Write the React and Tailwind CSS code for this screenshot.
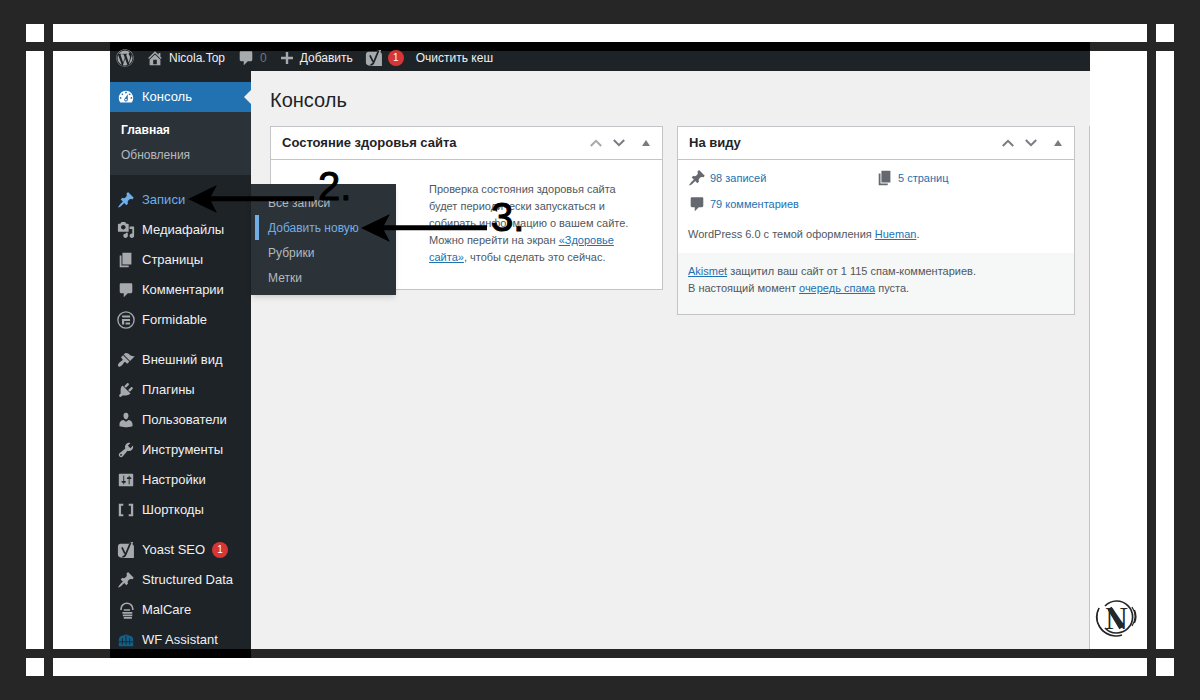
/**
 * WordPress dashboard with the "Posts" flyout open,
 * placed in a double-ruled frame with numbered arrows on top.
 */
import React from 'react';
import { FaWordpress } from 'react-icons/fa';

const paths = {
  dashboard:
    'M3.76 16h12.48c1.1-1.37 1.76-3.11 1.76-5 0-4.42-3.58-8-8-8s-8 3.58-8 8c0 1.89.66 3.63 1.76 5zM10 4c.55 0 1 .45 1 1s-.45 1-1 1-1-.45-1-1 .45-1 1-1zM6 6c.55 0 1 .45 1 1s-.45 1-1 1-1-.45-1-1 .45-1 1-1zm8 0c.55 0 1 .45 1 1s-.45 1-1 1-1-.45-1-1 .45-1 1-1zm-5.37 5.55L12 7v6c0 1.1-.9 2-2 2s-2-.9-2-2c0-.57.24-1.08.63-1.45zM4 10c.55 0 1 .45 1 1s-.45 1-1 1-1-.45-1-1 .45-1 1-1zm12 0c.55 0 1 .45 1 1s-.45 1-1 1-1-.45-1-1 .45-1 1-1zm-5 3c0-.55-.45-1-1-1s-1 .45-1 1 .45 1 1 1 1-.45 1-1z',
  home: 'M16 8.5l1.53 1.53-1.06 1.06L10 4.6l-6.47 6.49-1.06-1.06L10 2.5l4 4v-2h2v4zm-6-2.46l6 5.99V18H4v-5.97zM12 17v-5H8v5h4z',
  plus: 'M17.500 8.500v3h-6v6h-3v-6h-6v-3h6v-6h3v6z',
  pin: 'M10.44 3.02l1.82-1.82 6.36 6.35-1.83 1.82c-1.05-.68-2.48-.57-3.41.36l-.75.75c-.92.93-1.04 2.35-.35 3.41l-1.83 1.82-2.41-2.41-2.8 2.79c-.42.42-3.38 2.71-3.8 2.29s1.86-3.39 2.28-3.81l2.79-2.79L4.1 9.36l1.83-1.82c1.05.69 2.48.57 3.4-.36l.75-.75c.93-.92 1.05-2.35.36-3.41z',
  page: 'M6 15V2h10v13H6zm-1 1h8v2H3V5h2v11z',
  comment:
    'M4.500 2.500h11c.9 0 1.500.6 1.500 1.500v8c0 .9-.6 1.500-1.500 1.500H12L7.500 18v-4.500h-3C3.600 13.500 3 12.900 3 12V4c0-.9.6-1.500 1.500-1.500z',
  media:
    'M13 11V4c0-.55-.45-1-1-1h-1.67L9 1H5L3.67 3H2c-.55 0-1 .45-1 1v7c0 .55.45 1 1 1h10c.55 0 1-.45 1-1zM7 4.5c1.38 0 2.5 1.12 2.5 2.5S8.38 9.5 7 9.5 4.5 8.38 4.5 7 5.62 4.5 7 4.5zM14 6h5v10.5c0 1.38-1.12 2.5-2.5 2.5S14 17.88 14 16.5s1.12-2.5 2.5-2.5c.17 0 .34.02.5.05V9h-3V6zm-4 8.05V13h2v3.5c0 1.38-1.12 2.5-2.5 2.5S7 17.88 7 16.5 8.12 14 9.5 14c.17 0 .34.02.5.05z',
  appearance:
    'M14.48 11.06L7.41 3.99l1.5-1.5c.5-.56 2.3-.47 3.51.32 1.21.8 1.43 1.28 2.91 2.1 1.18.64 2.45 1.26 4.45.85zm-.71.71L6.7 4.7 4.93 6.47c-.39.39-.39 1.02 0 1.41l1.06 1.06c.39.39.39 1.03 0 1.42-.6.6-1.43 1.11-2.21 1.69-.35.26-.7.53-1.01.84C1.43 14.23.4 16.08 1.4 17.07c.99 1 2.84-.03 4.18-1.36.31-.31.58-.66.85-1.02.57-.78 1.08-1.61 1.69-2.21.39-.39 1.02-.39 1.41 0l1.06 1.06c.39.39 1.02.39 1.41 0z',
  plugins:
    'M13.11 4.36L9.87 7.6 8 5.73l3.24-3.24c.35-.34 1.05-.2 1.56.32.52.51.66 1.21.31 1.55zm-8 1.77l.91-1.12 9.01 9.01-1.19.84c-.71.71-2.63 1.16-3.82 1.16H6.14L4.9 17.26c-.59.59-1.54.59-2.12 0-.59-.58-.59-1.53 0-2.12l1.24-1.24v-3.88c0-1.13.4-3.19 1.09-3.89zm7.26 3.97l3.24-3.24c.34-.35 1.04-.21 1.55.31.52.51.66 1.21.31 1.55l-3.24 3.25z',
  users:
    'M10 9.25c-2.27 0-2.73-3.44-2.73-3.44C7 4.02 7.82 2 9.97 2c2.16 0 2.98 2.02 2.71 3.81 0 0-.41 3.44-2.68 3.44zm0 2.57L12.72 10c2.39 0 4.52 2.33 4.52 4.53v2.49s-3.65 1.13-7.24 1.13c-3.65 0-7.24-1.13-7.24-1.13v-2.49c0-2.25 1.94-4.48 4.47-4.48z',
  tools:
    'M16.68 9.77c-1.34 1.34-3.3 1.67-4.95.99l-5.41 6.52c-.99.99-2.59.99-3.58 0s-.99-2.59 0-3.57l6.52-5.42c-.68-1.65-.35-3.61.99-4.95 1.28-1.28 3.12-1.62 4.72-1.06l-2.89 2.89 2.82 2.82 2.86-2.87c.53 1.58.18 3.39-1.08 4.65zM3.81 16.21c.4.39 1.04.39 1.43 0 .4-.4.4-1.04 0-1.43-.39-.4-1.03-.4-1.43 0-.39.39-.39 1.03 0 1.43z',
  settings:
    'M18 16V4c0-.55-.45-1-1-1H3c-.55 0-1 .45-1 1v12c0 .55.45 1 1 1h14c.55 0 1-.45 1-1zM8 11h1c.55 0 1 .45 1 1s-.45 1-1 1H8v1.5c0 .28-.22.5-.5.5s-.5-.22-.5-.5V13H6c-.55 0-1-.45-1-1s.45-1 1-1h1V5.5c0-.28.22-.5.5-.5s.5.22.5.5V11zm5-2h-1c-.55 0-1-.45-1-1s.45-1 1-1h1V5.5c0-.28.22-.5.5-.5s.5.22.5.5V7h1c.55 0 1 .45 1 1s-.45 1-1 1h-1v5.5c0 .28-.22.5-.5.5s-.5-.22-.5-.5V9z',
  brackets: 'M2 3h5v2.200H4.500v9.600H7V17H2zM18 3h-5v2.200h2.500v9.600H13V17h5z',
};

const Icon = ({ name, className = 'size-[18px]' }) => (
  <svg viewBox="0 0 20 20" fill="currentColor" aria-hidden="true" className={`shrink-0 ${className}`}>
    <path d={paths[name]} />
  </svg>
);

const YoastIcon = () => (
  <svg viewBox="0 0 20 20" aria-hidden="true" className="size-[18px] shrink-0">
    <path
      d="M4 3h9.500L14.500 1H18l-1 2.500c1 .4 1.800 1.400 1.800 2.700V19H8l-4-.8c-1.700 0-3-1.200-3-2.800V6c0-1.700 1.300-3 3-3z"
      fill="currentColor"
    />
    <path d="M5.500 7l3.300 7M15.200 1.500L9.800 14.500c-.8 2-1.800 3-3.800 3" fill="none" stroke="#1d2327" strokeWidth="1.900" />
  </svg>
);

const FormidableIcon = () => (
  <svg viewBox="0 0 20 20" aria-hidden="true" className="size-[18px] shrink-0">
    <circle cx="10" cy="10" r="9" fill="none" stroke="currentColor" strokeWidth="1.500" />
    <path d="M5.500 5h9v2.200H7c-.8 0-1.500-.7-1.500-1.500zM5.500 8.800h9V11H8v4H5.500zM9.500 12.700h5V15h-5z" fill="currentColor" />
  </svg>
);

const MalCareIcon = () => (
  <svg viewBox="0 0 20 20" aria-hidden="true" className="size-[18px] shrink-0" fill="none" stroke="currentColor">
    <path d="M4.500 10V8.500a6.500 6 0 0 1 13 0V10" strokeWidth="1.800" />
    <path d="M7.500 10h7M6 13.200h11M6.500 16h10.500M7.500 18.800h9" strokeWidth="1.900" />
  </svg>
);

const WordfenceIcon = () => (
  <svg viewBox="0 0 20 20" aria-hidden="true" className="size-[18px] shrink-0" fill="#11608a">
    <path d="M2 9c.5-3 3-4 5-4l3-1.500L13 5c2 0 4.500 1 5 4v8H2z" />
    <path d="M6 8v7M10 5v10M14 8v7M2 12h16" stroke="#1d2327" strokeWidth="1" />
  </svg>
);

const groups = [
  [
    { label: 'Записи', icon: <Icon name="pin" />, open: true },
    { label: 'Медиафайлы', icon: <Icon name="media" /> },
    { label: 'Страницы', icon: <Icon name="page" /> },
    { label: 'Комментарии', icon: <Icon name="comment" /> },
    { label: 'Formidable', icon: <FormidableIcon /> },
  ],
  [
    { label: 'Внешний вид', icon: <Icon name="appearance" /> },
    { label: 'Плагины', icon: <Icon name="plugins" /> },
    { label: 'Пользователи', icon: <Icon name="users" /> },
    { label: 'Инструменты', icon: <Icon name="tools" /> },
    { label: 'Настройки', icon: <Icon name="settings" /> },
    { label: 'Шорткоды', icon: <Icon name="brackets" /> },
  ],
  [
    { label: 'Yoast SEO', icon: <YoastIcon />, count: 1 },
    { label: 'Structured Data', icon: <Icon name="pin" /> },
    { label: 'MalCare', icon: <MalCareIcon /> },
    { label: 'WF Assistant', icon: <WordfenceIcon /> },
  ],
];

const Badge = ({ children }) => (
  <span className="flex size-4 items-center justify-center rounded-full bg-[#d63638] text-[10px] leading-none text-white">
    {children}
  </span>
);

const Toolbar = () => (
  <header className="-mt-[9px] border-t-[9px] border-black bg-[#1d2327] text-xs text-[#f0f0f1]">
    <nav className="flex h-5 items-center gap-3 pb-[6px] pl-[6px]">
      <a href="#wp" aria-label="WordPress" className="text-[#a7aaad]">
        <FaWordpress size={18} />
      </a>
      <a href="#site" className="flex items-center gap-[5px]">
        <Icon name="home" className="size-[18px] text-[#a7aaad]" />
        Nicola.Top
      </a>
      <a href="#comments" className="flex items-center gap-[5px] text-[#a7aaad]">
        <Icon name="comment" className="size-[18px]" />
        <span className="text-[#70767c]">0</span>
      </a>
      <a href="#new" className="flex items-center gap-[5px]">
        <Icon name="plus" className="size-4 text-[#a7aaad]" />
        Добавить
      </a>
      <a href="#yoast" className="flex items-center gap-[5px] text-[#a7aaad]">
        <YoastIcon />
        <Badge>1</Badge>
      </a>
      <a href="#cache">Очистить кеш</a>
    </nav>
  </header>
);

const Flyout = () => (
  <ul className="absolute -top-px left-full z-10 w-[145px] bg-[#2c3338] pt-[6px] pb-[5px] text-xs text-[#b4b9be] shadow-md">
    {['Все записи', 'Добавить новую', 'Рубрики', 'Метки'].map((item) => (
      <li key={item}>
        <a
          href="#posts"
          className={
            item === 'Добавить новую'
              ? 'ml-1 flex h-[25px] items-center border-l-4 border-[#72aee6] pl-[9px] text-[#72aee6]'
              : 'ml-1 flex h-[25px] items-center pl-[13px]'
          }
        >
          {item}
        </a>
      </li>
    ))}
  </ul>
);

const Sidebar = () => (
  <aside className="relative -mb-[9px] w-[141px] shrink-0 bg-[#1d2327] pt-[11px] text-[13px] text-[#f0f0f1]">
    <a href="#dashboard" className="relative flex h-[30px] items-center gap-[7px] bg-[#2271b1] pl-[7px] text-white">
      <Icon name="dashboard" />
      Консоль
      <span className="absolute right-0 border-y-[7px] border-r-[7px] border-y-transparent border-r-[#f0f0f1]" />
    </a>
    <ul className="bg-[#2c3338] pt-[5px] pb-2 pl-[11px] text-xs">
      <li className="flex h-[25px] items-center font-bold text-white">
        <a href="#home">Главная</a>
      </li>
      <li className="flex h-[25px] items-center text-[#b4b9be]">
        <a href="#updates">Обновления</a>
      </li>
    </ul>
    <div className="flex flex-col gap-[10px] pt-[10px]">
      {groups.map((group, i) => (
        <ul key={i}>
          {group.map(({ label, icon, open, count }) => (
            <li key={label} className="relative">
              <a
                href="#menu"
                className={`flex h-[30px] items-center gap-[7px] pl-[7px] ${open ? 'text-[#72aee6]' : ''}`}
              >
                <span className={open ? '' : 'text-[#a7aaad]'}>{icon}</span>
                {label}
                {count && <Badge>{count}</Badge>}
              </a>
              {open && <Flyout />}
            </li>
          ))}
        </ul>
      ))}
    </div>
    <div className="absolute inset-x-0 bottom-0 h-[9px] bg-black" />
  </aside>
);

const Panel = ({ title, first, children }) => (
  <section className="border border-[#c3c4c7] bg-white">
    <div className="flex h-[33px] items-center border-b border-[#c3c4c7] pr-[10px] pl-[11px]">
      <h2 className="flex-1 text-[13px] font-bold text-[#1d2327]">{title}</h2>
      <div className="flex items-center text-[#787c82]">
        <button
          type="button"
          aria-label="Выше"
          className={`flex w-[23px] justify-center ${first ? 'text-[#a7aaad]' : ''}`}
        >
          <svg viewBox="0 0 12 8" className="h-2 w-3" fill="none" stroke="currentColor" strokeWidth="2">
            <path d="M.8 7L6 1.800 11.200 7" />
          </svg>
        </button>
        <button type="button" aria-label="Ниже" className="flex w-[23px] justify-center">
          <svg viewBox="0 0 12 8" className="h-2 w-3" fill="none" stroke="currentColor" strokeWidth="2">
            <path d="M.8 1L6 6.200 11.200 1" />
          </svg>
        </button>
        <button type="button" aria-label="Свернуть" className="ml-[10px] flex w-3 justify-center">
          <svg viewBox="0 0 8 6" className="h-[6px] w-2" fill="currentColor">
            <path d="M4 0l4 6H0z" />
          </svg>
        </button>
      </div>
    </div>
    {children}
  </section>
);

const Link = ({ children }) => (
  <a href="#link" className="text-[#2271b1] underline">
    {children}
  </a>
);

const Glance = ({ icon, children }) => (
  <li className="flex h-[26px] items-center gap-1">
    <Icon name={icon} className="size-[18px] text-[#646970]" />
    <a href="#glance" className="text-[#2271b1]">
      {children}
    </a>
  </li>
);

const Main = () => (
  <main className="flex min-w-0 flex-1 flex-col bg-[#f0f0f1] pl-[19px] text-[#50575e]">
    <h1 className="pt-[15px] pb-3 text-xl text-[#1d2327]">Консоль</h1>
    <div className="grid flex-1 grid-cols-[393fr_398fr_1px] items-start gap-x-[14px]">
      <Panel title="Состояние здоровья сайта" first>
        <p className="pt-[21px] pr-5 pb-[23px] pl-[158px] text-[11px] leading-[17px]">
          Проверка состояния здоровья сайта будет периодически запускаться и собирать информацию о вашем сайте. Можно
          перейти на экран <Link>«Здоровье сайта»</Link>, чтобы сделать это сейчас.
        </p>
      </Panel>
      <Panel title="На виду">
        <div className="px-[10px] pt-[5px] text-[11px] leading-[17px]">
          <ul className="grid grid-cols-2">
            <Glance icon="pin">98 записей</Glance>
            <Glance icon="page">5 страниц</Glance>
            <Glance icon="comment">79 комментариев</Glance>
          </ul>
          <p className="pt-[9px] pb-[10px]">
            WordPress 6.0 с темой оформления <Link>Hueman</Link>.
          </p>
        </div>
        <div className="bg-[#f6f7f7] px-[10px] pt-[10px] pb-[17px] text-[11px] leading-[17px]">
          <p>
            <Link>Akismet</Link> защитил ваш сайт от 1 115 спам-комментариев.
          </p>
          <p>
            В настоящий момент <Link>очередь спама</Link> пуста.
          </p>
        </div>
      </Panel>
      <div className="self-stretch bg-[#c3c4c7]" />
    </div>
  </main>
);

// Step arrows drawn over the admin screen
const Steps = () => (
  <div className="pointer-events-none absolute inset-0 z-20 text-[40px] leading-10 text-black [-webkit-text-stroke:1px]">
    <svg viewBox="0 0 128 28" className="absolute top-[134px] left-[78px] h-7 w-32">
      <path d="M0 14L29 0l-6 11.300h103v5H23L29 28z" />
    </svg>
    <span className="absolute top-[115px] left-[208px]">2.</span>
    <svg viewBox="0 0 128 28" className="absolute top-[163px] left-[251px] h-7 w-32">
      <path d="M0 14L29 0l-6 11.300h103v5H23L29 28z" />
    </svg>
    <span className="absolute top-[146px] left-[381px]">3.</span>
  </div>
);

const Logo = () => (
  <svg
    viewBox="0 0 42 40"
    role="img"
    aria-label="N"
    className="absolute right-[10px] bottom-[10px] h-10 w-[42px]"
  >
    <g fill="none" stroke="#262626">
      <path d="M10 7a16 16 0 1 1 0 22" strokeWidth="1.700" />
      <path d="M4 9C-3 22 7 36 20 37c3 .2 5-.2 7-1" strokeWidth="1.500" />
      <path d="M4 9C-1 20 4 30 10 33.500" strokeWidth="1.200" />
      <path d="M37 8c4 6 4 13 0 19M39.500 11c2 5 2 9 0 13" strokeWidth="1.300" />
      <path d="M14.500 9l12 20" strokeWidth="5" />
    </g>
    <text x="10" y="30" fontFamily="Liberation Serif, serif" fontSize="32" fill="#262626">
      N
    </text>
  </svg>
);

const Blank = () => <div className="bg-white" />;

const App = () => (
  <div className="grid min-h-screen grid-cols-[18px_1fr_18px] grid-rows-[18px_1fr_18px] gap-[9px] bg-[#262626] px-[26px] py-6 font-['Liberation_Sans',sans-serif]">
    <Blank />
    <Blank />
    <Blank />
    <Blank />
    <div className="relative flex bg-white px-[57px]">
      <div className="relative flex min-w-0 flex-1 flex-col">
        <Toolbar />
        <div className="flex flex-1">
          <Sidebar />
          <Main />
        </div>
        <Steps />
      </div>
      <Logo />
    </div>
    <Blank />
    <Blank />
    <Blank />
    <Blank />
  </div>
);

export default App;
